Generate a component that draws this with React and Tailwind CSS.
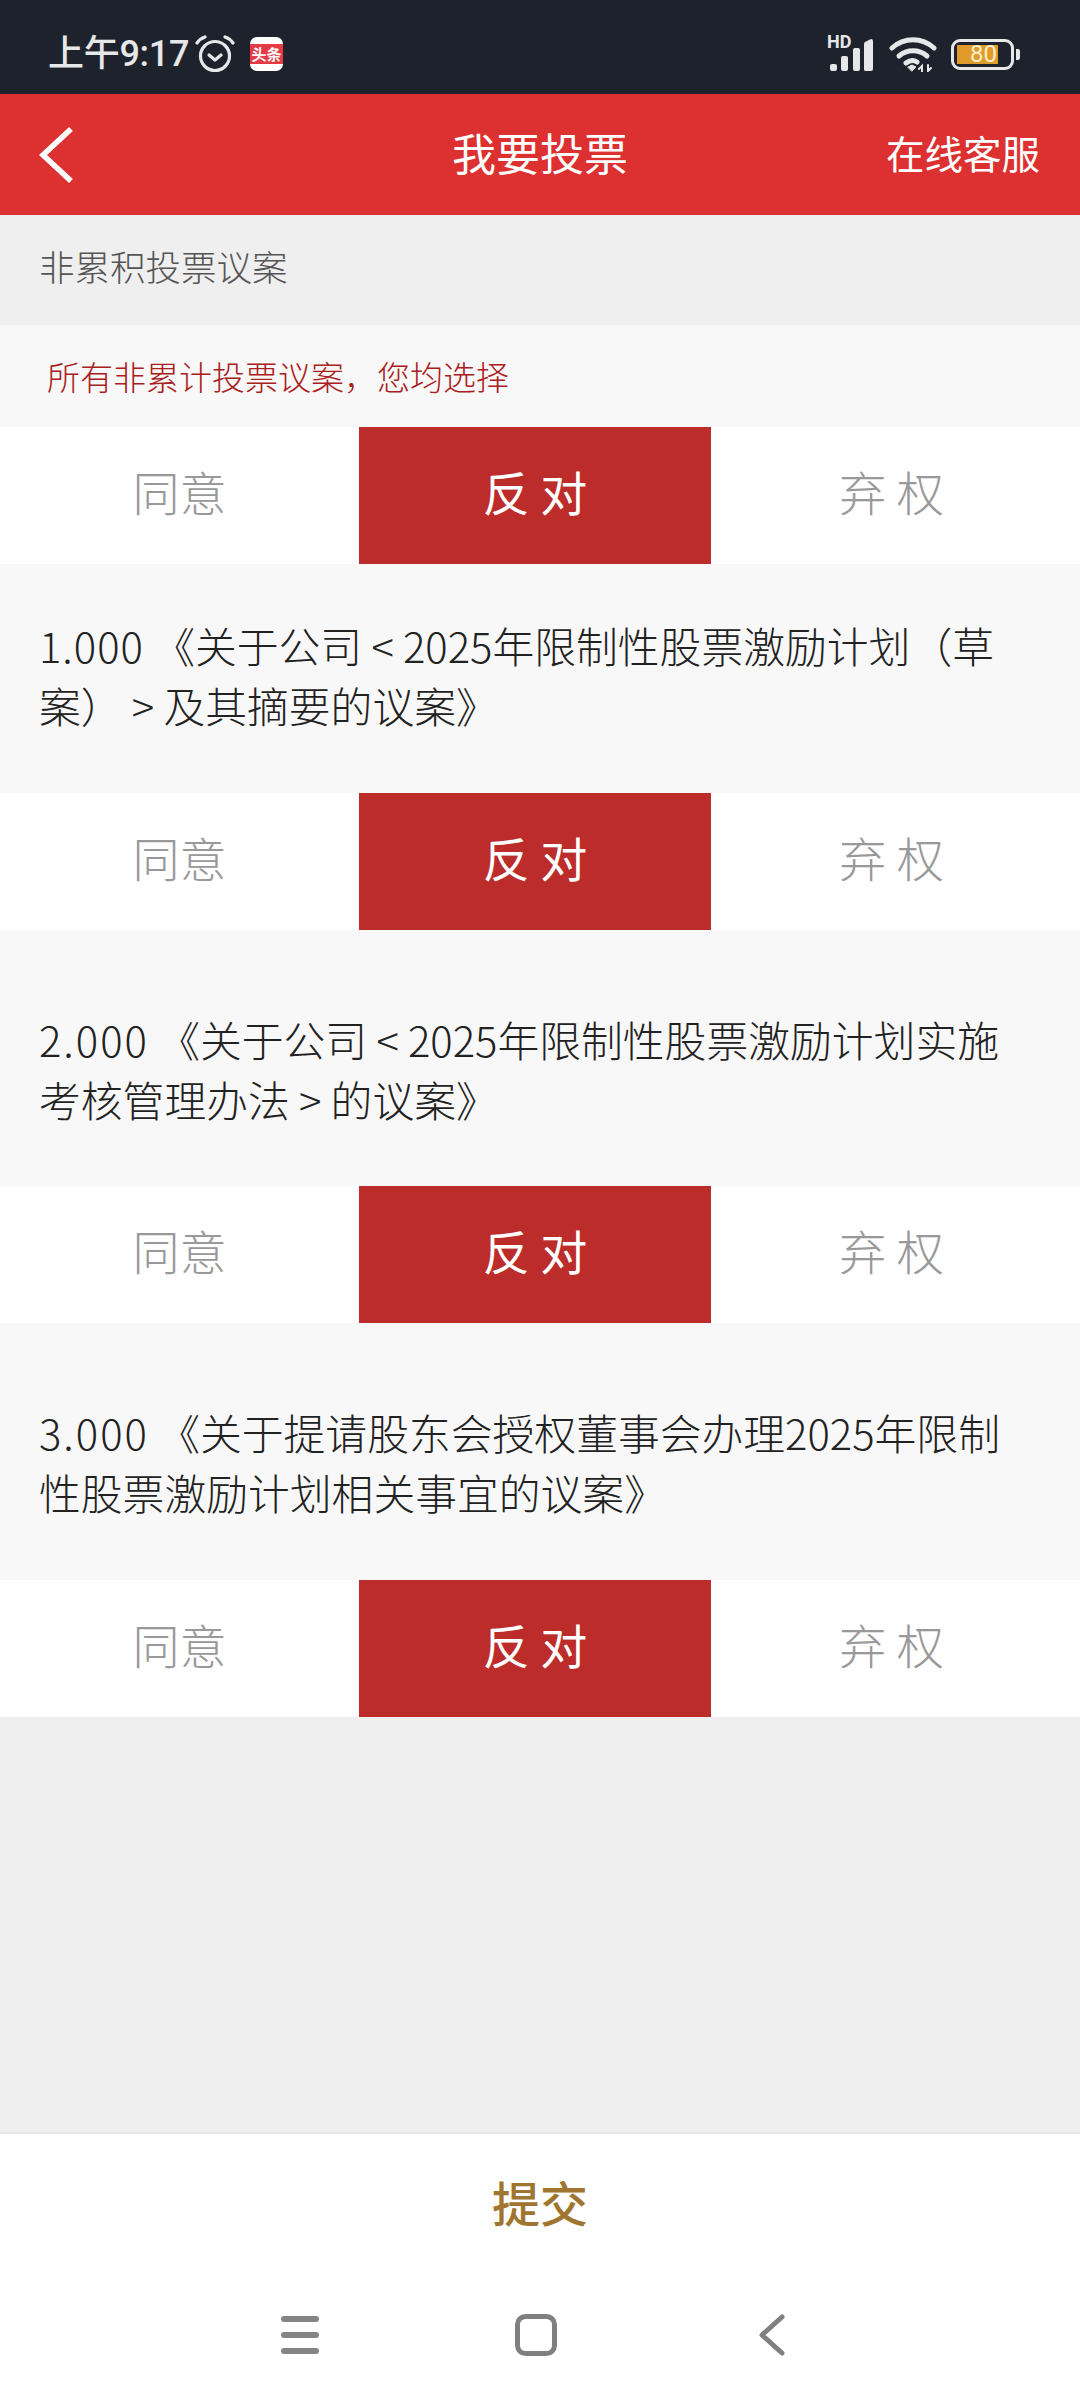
const items = [
  { num: '1.000', gap: 'tracking-[1px]', lines: ['《关于公司 < 2025年限制性股票激励计划（草', '案） > 及其摘要的议案》'], pad: 'pt-[51px] pb-[58px]' },
  { num: '2.000', gap: 'tracking-[2px]', lines: ['《关于公司 < 2025年限制性股票激励计划实施', '考核管理办法 > 的议案》'], pad: 'pt-[79px] pb-[57px]' },
  { num: '3.000', gap: 'tracking-[2px]', lines: ['《关于提请股东会授权董事会办理2025年限制', '性股票激励计划相关事宜的议案》'], pad: 'pt-[79px] pb-[58px]' }
]

function VoteRow() {
  return (
    <div className="grid grid-cols-[359px_352px_369px] h-[137px] bg-white text-[47px] font-light text-[#999999]">
      <div className="flex items-center justify-center pb-[8px]">同意</div>
      <div className="flex items-center justify-center pb-[8px] bg-[#bc2c2a] text-white font-normal">反&nbsp;对</div>
      <div className="flex items-center justify-center pb-[8px] pr-[8px]">弃&nbsp;权</div>
    </div>
  )
}

function AlarmIcon() {
  return (
    <svg width="40" height="38" viewBox="0 0 40 38" fill="none" stroke="#e6e7e9" strokeWidth="3.2" strokeLinecap="round">
      <circle cx="20" cy="21" r="14.5" />
      <path d="M14 20l6 5 6-5" strokeLinejoin="round" />
      <path d="M2 8c2-3 5-5 8-6M38 8c-2-3-5-5-8-6" />
    </svg>
  )
}

function SignalIcon() {
  return (
    <div className="relative w-[50px] h-[34px]">
      <span className="absolute left-0 top-[-4px] text-[18px] font-bold leading-[18px] text-[#e6e7e9] font-['Roboto',sans-serif]">HD</span>
      <svg width="50" height="34" viewBox="0 0 50 34" fill="#e6e7e9">
        <rect x="3" y="27" width="7" height="7" rx="2" />
        <rect x="14" y="19" width="7" height="15" rx="2" />
        <rect x="26" y="11" width="7" height="23" rx="2" />
        <path d="M38 5l6-3q2 0 2 2v28q0 2-2 2h-6q-1 0-1-2v-25q0-1 1-2z" />
      </svg>
    </div>
  )
}

function WifiIcon() {
  return (
    <svg width="48" height="36" viewBox="0 0 48 36" fill="none" stroke="#e6e7e9" strokeWidth="5" strokeLinecap="round">
      <path d="M3 12c12-11 30-11 42 0" />
      <path d="M10 20c8-7 20-7 28 0" />
      <path d="M17 27c4-3 8-3 11-1" />
      <path d="M19 31l4-2 4 2-4 4z" fill="#e6e7e9" strokeWidth="1" />
      <path d="M33 36v-6l-3 3M39 29v6l3-3" strokeWidth="2" />
    </svg>
  )
}

function BatteryIcon() {
  return (
    <div className="flex items-center gap-[2px]">
      <div className="w-[63px] h-[31px] rounded-[9px] border-[3px] border-[#e6e7e9] p-[3px] pr-[13px]">
        <div className="h-full bg-[#e09a28] flex items-center justify-end pr-[1px] text-[24px] leading-none text-[#fbeecb] font-['Roboto',sans-serif]">80</div>
      </div>
      <div className="w-[4px] h-[11px] rounded-r-[2px] bg-[#e6e7e9]" />
    </div>
  )
}

export default function App() {
  return (
    <div className="w-[1080px] h-[2400px] flex flex-col bg-[#efefef] font-['Noto_Sans_CJK_SC','Noto_Sans',sans-serif]">
      {/* Status bar */}
      <div className="h-[94px] bg-[#1e222d] flex items-center pl-[48px] pr-[60px] pt-[14px] text-[#e6e7e9]">
        <span className="text-[36px] leading-none font-medium tracking-[-0.3px] font-['Roboto','Noto_Sans_CJK_SC',sans-serif]">上午9:17</span>
        <div className="ml-[6px]"><AlarmIcon /></div>
        <div className="ml-[15px] w-[33px] h-[34px] rounded-[7px] bg-white flex items-center">
          <div className="w-full h-[20px] bg-[#e63a44] text-white text-[15px] font-bold leading-[20px] text-center whitespace-nowrap overflow-hidden">头条</div>
        </div>
        <div className="ml-auto flex items-center">
          <SignalIcon />
          <div className="ml-[12px]"><WifiIcon /></div>
          <div className="ml-[14px]"><BatteryIcon /></div>
        </div>
      </div>

      {/* Header */}
      <div className="h-[121px] bg-[#dc3031] grid grid-cols-[1fr_auto_1fr] items-center pl-[38px] pr-[40px] text-white">
        <svg width="36" height="58" viewBox="0 0 36 58" fill="none" stroke="white" strokeWidth="5.5">
          <path d="M33 3L5 29l28 26" />
        </svg>
        <div className="text-[44px] font-normal leading-none pb-[6px] pl-[2px]">我要投票</div>
        <div className="text-right text-[38.5px] leading-none pb-[4px]">在线客服</div>
      </div>

      {/* Section */}
      <div className="h-[110px] flex items-center pl-[39px] pb-[8px] text-[35.5px] font-light text-[#555555]">非累积投票议案</div>
      <div className="h-[102px] bg-[#f8f8f8] flex items-center pl-[47px] pt-[2px] text-[33px] font-light text-[#aa2020]">所有非累计投票议案，您均选择</div>
      <VoteRow />

      {items.map((item) => (
        <div key={item.num}>
          <div className={`bg-[#f8f8f8] pl-[39px] text-[41.8px] font-light leading-[60px] text-[#222222] whitespace-nowrap ${item.pad}`}>
            <div><span className={item.gap}>{item.num}</span> {item.lines[0]}</div>
            <div>{item.lines[1]}</div>
          </div>
          <VoteRow />
        </div>
      ))}

      <div className="flex-1" />

      {/* Submit */}
      <div className="h-[268px] bg-white border-t-[2px] border-[#e6e6e6] flex flex-col items-center">
        <div className="h-[136px] flex items-center justify-center text-[48px] font-medium text-[#a0752f] pb-[2px]">提交</div>
        <div className="w-full flex items-center pt-[44px] pl-[281px]">
          <svg width="38" height="38" viewBox="0 0 38 38" fill="#858585">
            <rect x="0" y="0" width="38" height="6" rx="3" />
            <rect x="0" y="16" width="38" height="6" rx="3" />
            <rect x="0" y="32" width="38" height="6" rx="3" />
          </svg>
          <svg className="ml-[196px]" width="42" height="42" viewBox="0 0 42 42" fill="none" stroke="#808080" strokeWidth="5">
            <rect x="2.5" y="2.5" width="37" height="37" rx="8" />
          </svg>
          <svg className="ml-[202px]" width="26" height="42" viewBox="0 0 26 42" fill="none" stroke="#808080" strokeWidth="5" strokeLinecap="round" strokeLinejoin="round">
            <path d="M23 3L3 21l20 18" />
          </svg>
        </div>
      </div>
    </div>
  )
}
